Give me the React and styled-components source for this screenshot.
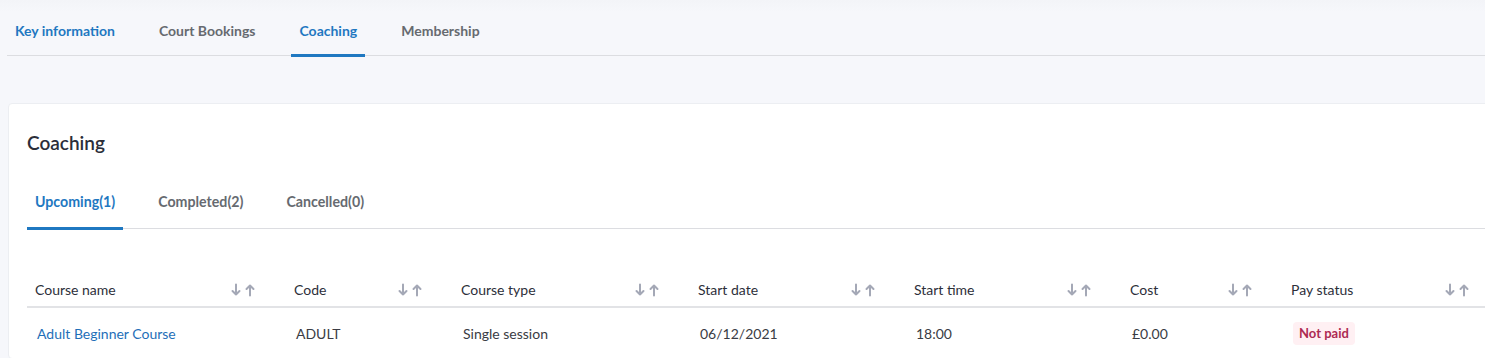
import React from "react";
import styled, { createGlobalStyle } from "styled-components";

const GlobalStyle = createGlobalStyle`
  html, body {
    margin: 0;
    padding: 0;
    overflow: hidden;
    background: #f6f7fb;
    font-family: Lato, "Open Sans", Arial, sans-serif;
    color: #333;
  }
`;

const Page = styled.div`
  width: 1540px;
  padding-left: 7px;
  background: linear-gradient(#f3f4f8 0px, #f6f7fb 12px);
  min-height: 358px;
`;

const TabBar = styled.nav`
  display: flex;
  gap: ${(p) => p.$gap || 28}px;
  border-bottom: 1px solid #dcdde1;
`;

const Tab = styled.div`
  position: relative;
  padding: ${(p) => (p.$tall ? "22px 8px 16px" : "18px 8px 18px")};
  font-size: ${(p) => (p.$tall ? "14px" : "14.2px")};
  line-height: 17px;
  font-weight: 700;
  color: ${(p) => (p.$active || p.$blue ? "#1f78c1" : "#666a70")};
  cursor: pointer;
  &::after {
    content: "";
    position: absolute;
    left: 0;
    right: 0;
    bottom: -2px;
    height: 3px;
    background: ${(p) => (p.$active ? "#1f78c1" : "transparent")};
  }
`;

const Card = styled.section`
  margin: 47px 0 0 1px;
  background: #fff;
  border: 1px solid #eceef2;
  border-radius: 4px;
  padding: 27px 18px 0 18px;
`;

const Title = styled.h2`
  margin: 0 0 20px;
  font-size: 19px;
  line-height: 24px;
  font-weight: 600;
  color: #2b2e3a;
`;

const Table = styled.table`
  margin-top: 31px;
  border-collapse: collapse;
  table-layout: fixed;
  width: 1473px;
`;

const HeadCell = styled.th`
  box-sizing: border-box;
  width: ${(p) => p.$w}px;
  padding: 21px 29px 8px 8px;
  border-bottom: 2px solid #e2e3e6;
  text-align: left;
  font-size: 14px;
  line-height: 17px;
  font-weight: 400;
  color: #2d2f3a;
`;

const HeadInner = styled.div`
  display: flex;
  align-items: center;
  justify-content: space-between;
`;

const Cell = styled.td`
  padding: 13px 8px 13px 10px;
  font-size: 14px;
  line-height: 23px;
  color: ${(p) => (p.$link ? "#1f6fb8" : "#3a3c44")};
`;

const Badge = styled.span`
  display: inline-block;
  padding: 0 6px;
  border-radius: 4px;
  background: #fff0f3;
  color: #ad2a52;
  font-size: 13px;
  font-weight: 700;
  line-height: 23px;
`;

const SortIcon = () => (
  <svg width="26" height="14" viewBox="0 0 26 14" fill="none" stroke="#a4a8b6" strokeWidth="2" strokeLinecap="round" strokeLinejoin="round">
    <path d="M5 1.5v10M1.5 8l3.5 3.5L8.5 8" />
    <path d="M19 12.5v-10M15.5 6l3.5-3.5L22.5 6" />
  </svg>
);

const columns = [
  { label: "Course name", w: 259 },
  { label: "Code", w: 167 },
  { label: "Course type", w: 237 },
  { label: "Start date", w: 216 },
  { label: "Start time", w: 216 },
  { label: "Cost", w: 161 },
  { label: "Pay status", w: 217 },
];

export default function App() {
  return (
    <Page>
      <GlobalStyle />
      <TabBar>
        <Tab $tall $blue>Key information</Tab>
        <Tab $tall>Court Bookings</Tab>
        <Tab $tall $active>Coaching</Tab>
        <Tab $tall>Membership</Tab>
      </TabBar>
      <Card>
        <Title>Coaching</Title>
        <TabBar $gap={27}>
          <Tab $active>Upcoming(1)</Tab>
          <Tab>Completed(2)</Tab>
          <Tab>Cancelled(0)</Tab>
        </TabBar>
        <Table>
          <thead>
            <tr>
              {columns.map((c) => (
                <HeadCell key={c.label} $w={c.w}>
                  <HeadInner>
                    <span>{c.label}</span>
                    <SortIcon />
                  </HeadInner>
                </HeadCell>
              ))}
            </tr>
          </thead>
          <tbody>
            <tr>
              <Cell $link>Adult Beginner Course</Cell>
              <Cell>ADULT</Cell>
              <Cell>Single session</Cell>
              <Cell>06/12/2021</Cell>
              <Cell>18:00</Cell>
              <Cell>£0.00</Cell>
              <Cell>
                <Badge>Not paid</Badge>
              </Cell>
            </tr>
          </tbody>
        </Table>
      </Card>
    </Page>
  );
}
